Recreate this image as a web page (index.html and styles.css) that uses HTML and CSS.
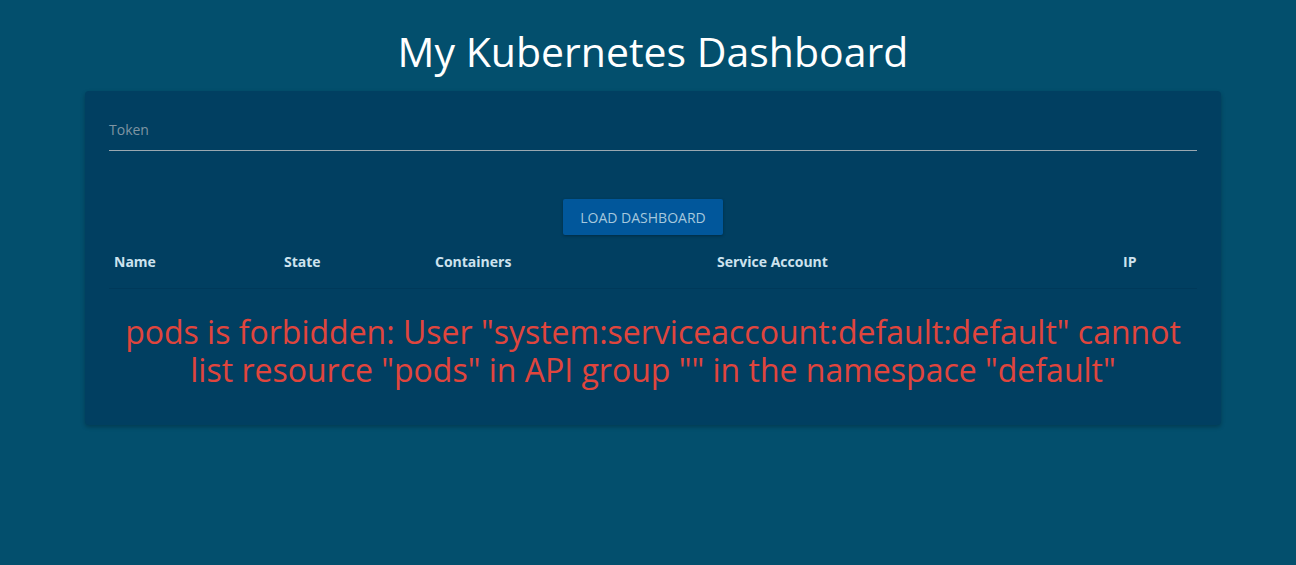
FILE: index.html
```html
<!DOCTYPE html>
<html>
<head>
<meta charset="utf-8">
<link rel="stylesheet" href="styles.css">
</head>
<body>
<div class="page">
  <h1 class="title">My Kubernetes Dashboard</h1>
  <div class="card">
    <div class="field">
      <label class="field-label">Token</label>
      <div class="field-line"></div>
    </div>
    <div class="actions">
      <button class="btn">LOAD DASHBOARD</button>
    </div>
    <table class="pods">
      <thead>
        <tr>
          <th class="c-name">Name</th>
          <th class="c-state">State</th>
          <th class="c-cont">Containers</th>
          <th class="c-sa">Service Account</th>
          <th class="c-ip">IP</th>
        </tr>
      </thead>
    </table>
    <p class="error">pods is forbidden: User "system:serviceaccount:default:default" cannot list resource "pods" in API group "" in the namespace "default"</p>
  </div>
</div>
</body>
</html>
```
FILE: styles.css
```css
html, body {
  margin: 0;
  padding: 0;
  height: 100%;
}
body {
  background: #034f6d;
  font-family: "Open Sans", "Noto Sans", sans-serif;
}
.page {
  display: flex;
  flex-direction: column;
  align-items: center;
  padding-top: 24px;
  padding-left: 10px;
}
.title {
  margin: 0 0 13px 0;
  font-weight: 400;
  font-size: 41px;
  line-height: 54px;
  color: #ffffff;
}
.card {
  width: 1136px;
  box-sizing: border-box;
  background: #013f61;
  border-radius: 4px;
  box-shadow: 0 2px 4px rgba(0,0,0,0.25);
  padding: 29px 24px 20px 24px;
}
.field {
  display: flex;
  flex-direction: column;
}
.field-label {
  font-size: 14px;
  line-height: 20px;
  color: #7f95a3;
}
.field-line {
  margin-top: 10px;
  height: 1px;
  background: #9aa8b1;
}
.actions {
  display: flex;
  justify-content: center;
  margin-top: 48px;
  padding-right: 20px;
}
.btn {
  width: 160px;
  height: 36px;
  border: none;
  border-radius: 2px;
  background: #01579b;
  color: #a6c8dd;
  font-family: "Open Sans", "Noto Sans", sans-serif;
  font-size: 14px;
  box-shadow: 0 1px 3px rgba(0,0,0,0.3);
}
.pods {
  width: 100%;
  border-collapse: collapse;
  margin-top: 0;
}
.pods th {
  text-align: left;
  font-size: 14px;
  font-weight: 700;
  color: #cde2ee;
  height: 53px;
  padding: 0 5px;
  border-bottom: 1px solid #00395a;
  box-sizing: border-box;
}
.c-name { width: 170px; }
.c-state { width: 151px; }
.c-cont { width: 282px; }
.c-sa { width: 406px; }
.error {
  margin: 24px 0 16px 0;
  text-align: center;
  color: #e0453d;
  font-size: 32px;
  line-height: 38px;
}
```
